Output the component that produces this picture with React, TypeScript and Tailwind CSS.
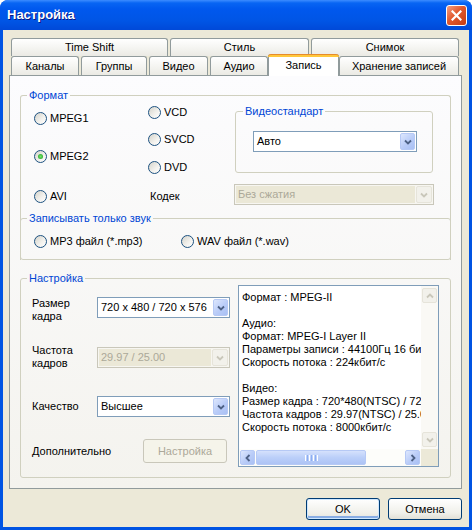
import React from 'react';
import clsx from 'clsx';

type Dir = 'down' | 'up' | 'left' | 'right';

const chevronPts: Record<Dir, string> = {
  down: '1,2.5 4,5.5 7,2.5',
  up: '1,5.5 4,2.5 7,5.5',
  left: '5.5,1 2.5,4 5.5,7',
  right: '2.5,1 5.5,4 2.5,7',
};

function Chevron({ dir = 'down', color = '#4D6185' }: { dir?: Dir; color?: string }) {
  return (
    <svg width="8" height="8" viewBox="0 0 8 8">
      <polyline points={chevronPts[dir]} fill="none" stroke={color} strokeWidth="1.8" />
    </svg>
  );
}

function ArrowBtn({ dir, disabled, className }: { dir: Dir; disabled?: boolean; className?: string }) {
  return (
    <div
      className={clsx(
        'flex items-center justify-center rounded-[2px] border shrink-0',
        disabled
          ? 'border-[#E6E4DA] bg-[#F2F1EB]'
          : 'border-[#B6C9F5] bg-[linear-gradient(135deg,#DDE7FD,#B9CCF8_55%,#A9C0F4)]',
        className
      )}
    >
      <Chevron dir={dir} color={disabled ? '#C9C7BA' : '#4D6185'} />
    </div>
  );
}

function Radio({ label, checked, className }: { label: string; checked?: boolean; className?: string }) {
  return (
    <div className={clsx('flex items-center gap-[3px] h-[13px]', className)}>
      <span className="flex items-center justify-center w-[13px] h-[13px] rounded-full border border-[#1C5180] bg-[linear-gradient(135deg,#D4D3CB,#F3F2EE_60%,#FFFFFF)] shrink-0">
        {checked && <span className="w-[5px] h-[5px] rounded-full bg-[radial-gradient(circle,#72E36C,#1E9E1E)]" />}
      </span>
      <span className="whitespace-nowrap">{label}</span>
    </div>
  );
}

function Combo({ value, disabled, className }: { value: string; disabled?: boolean; className?: string }) {
  if (disabled) {
    return (
      <div className={clsx('flex h-[21px] border border-[#C9C7BA] bg-[#F7F6F1] p-[1px]', className)}>
        <div className="flex-1 flex items-center pl-[2px] bg-[#EBE8D7] text-[#ACA899] whitespace-nowrap">{value}</div>
        <ArrowBtn dir="down" disabled className="w-[16px] ml-[1px]" />
      </div>
    );
  }
  return (
    <div className={clsx('flex h-[21px] border border-[#7F9DB9] bg-white p-[1px]', className)}>
      <div className="flex-1 flex items-center pl-[2px] whitespace-nowrap">{value}</div>
      <ArrowBtn dir="down" className="w-[15px]" />
    </div>
  );
}

function Tab({ label, w, selected }: { label: string; w: string; selected?: boolean }) {
  if (selected) {
    return (
      <div className={clsx('relative z-10 h-[22px] -mb-[1px] flex flex-col rounded-t-[3px] border-x border-[#919B9C] bg-white', w)}>
        <div className="h-[3px] -mx-[1px] rounded-t-[3px] border-t border-[#E68B2C] bg-[#FFC83C]" />
        <div className="flex-1 flex items-center justify-center pb-[2px]">{label}</div>
      </div>
    );
  }
  return (
    <div
      className={clsx(
        'h-full flex items-center justify-center rounded-t-[3px] border border-b-0 border-[#919B9C] bg-[linear-gradient(180deg,#FFFFFF,#F3F3EF_60%,#EBEAE4)]',
        w
      )}
    >
      {label}
    </div>
  );
}

const info = [
  'Формат : MPEG-II',
  '',
  'Аудио:',
  'Формат: MPEG-I Layer II',
  'Параметры записи : 44100Гц 16 бит',
  'Скорость потока : 224кбит/с',
  '',
  'Видео:',
  'Размер кадра : 720*480(NTSC) / 720*576(PAL)',
  'Частота кадров : 29.97(NTSC) / 25.00(PAL)',
  'Скорость потока : 8000кбит/с',
];

const groupBox = 'border border-[#D0D0BF] rounded-[3px] min-w-0';
const legend = 'ml-[6px] px-[2px] leading-[13px] text-[#0046D5]';

export default function App() {
  return (
    <div className="w-[472px] h-[530px] flex flex-col rounded-t-[8px] overflow-hidden bg-[#0054E3] font-['Liberation_Sans',Arial,sans-serif] text-[11px] text-black">
      {/* title bar */}
      <div className="h-[30px] shrink-0 flex items-center justify-between bg-[linear-gradient(180deg,#3C8CFF_0%,#0865F3_10%,#0058EE_30%,#0055E5_70%,#0049D8_100%)]">
        <span className="pl-[7px] text-[13px] font-bold text-white [text-shadow:1px_1px_#0A1883]">Настройка</span>
        <div className="mr-[5px] w-[21px] h-[21px] rounded-[3px] border border-white bg-[linear-gradient(135deg,#F39E82,#E2582D_45%,#C53C13)] flex items-center justify-center">
          <svg width="11" height="11" viewBox="0 0 11 11">
            <path d="M1.5 1.5 L9.5 9.5 M9.5 1.5 L1.5 9.5" stroke="white" strokeWidth="2.2" strokeLinecap="square" />
          </svg>
        </div>
      </div>

      {/* body */}
      <div className="flex-1 mx-[3px] mb-[3px] bg-[#ECE9D8] pt-[8px] flex flex-col">
        <div className="ml-[6px] w-[453px] flex flex-col">
          <div className="flex h-[18px] pl-[2px] gap-[2px]">
            <Tab label="Time Shift" w="w-[157px]" />
            <Tab label="Стиль" w="w-[139px]" />
            <Tab label="Снимок" w="w-[148px]" />
          </div>
          <div className="flex h-[19px] pl-[2px] items-end">
            <Tab label="Каналы" w="w-[68px]" />
            <div className="w-[2px]" />
            <Tab label="Группы" w="w-[66px]" />
            <div className="w-[2px]" />
            <Tab label="Видео" w="w-[59px]" />
            <div className="w-[2px]" />
            <Tab label="Аудио" w="w-[58px]" />
            <Tab label="Запись" w="w-[71px]" selected />
            <Tab label="Хранение записей" w="w-[120px]" />
          </div>

          {/* tab page */}
          <div className="border border-[#919B9C] bg-[linear-gradient(180deg,#FCFCFE,#F4F3EE)] px-[10px] pb-[10px]">
            {/* Формат */}
            <fieldset className={clsx(groupBox, 'mt-[13px] border-b-0 rounded-b-none')}>
              <legend className={legend}>Формат</legend>
              <div className="flex h-[110px] pl-[13px]">
                <div className="w-[114px] flex flex-col">
                  <Radio label="MPEG1" className="mt-[10px]" />
                  <Radio label="MPEG2" checked className="mt-[25px]" />
                  <Radio label="AVI" className="mt-[27px]" />
                </div>
                <div className="w-[86px] flex flex-col">
                  <Radio label="VCD" className="mt-[4px]" />
                  <Radio label="SVCD" className="mt-[14px]" />
                  <Radio label="DVD" className="mt-[15px]" />
                  <div className="mt-[16px] h-[13px] pl-[2px] flex items-center">Кодек</div>
                </div>
                <div className="w-[200px] flex flex-col">
                  <fieldset className={clsx(groupBox, 'mt-[3px] ml-[1px] w-[198px] pb-[20px]')}>
                    <legend className="ml-[7px] px-[2px] leading-[13px] text-[#0046D5]">Видеостандарт</legend>
                    <Combo value="Авто" className="mt-[13px] ml-[17px] w-[164px]" />
                  </fieldset>
                  <Combo value="Без сжатия" disabled className="mt-[11px] w-[200px]" />
                </div>
              </div>

              <fieldset className={clsx(groupBox, '-mx-[1px] pb-[11px]')}>
                <legend className={legend}>Записывать только звук</legend>
                <div className="flex mt-[10px] pl-[13px]">
                  <Radio label="MP3 файл (*.mp3)" className="w-[147px]" />
                  <Radio label="WAV файл (*.wav)" />
                </div>
              </fieldset>
            </fieldset>

            {/* Настройка */}
            <fieldset className={clsx(groupBox, 'mt-[12px] pb-[10px] pl-[11px] pr-[11px]')}>
              <legend className="-ml-[5px] px-[2px] leading-[13px] text-[#0046D5]">Настройка</legend>
              <div className="flex gap-[8px]">
                <div className="w-[198px] flex flex-col">
                  <div className="mt-[12px] flex items-start">
                    <div className="w-[65px] leading-[13px]">
                      Размер
                      <br />
                      кадра
                    </div>
                    <Combo value="720 x 480 / 720 x 576" className="w-[133px]" />
                  </div>
                  <div className="mt-[24px] flex items-start">
                    <div className="w-[65px] leading-[13px] -mt-[3px]">
                      Частота
                      <br />
                      кадров
                    </div>
                    <Combo value="29.97 / 25.00" disabled className="w-[133px]" />
                  </div>
                  <div className="mt-[26px] flex items-center">
                    <div className="w-[65px]">Качество</div>
                    <Combo value="Высшее" className="w-[133px]" />
                  </div>
                  <div className="mt-[22px] flex items-center">
                    <div className="w-[111px]">Дополнительно</div>
                    <div className="w-[84px] h-[24px] rounded-[3px] border border-[#C9C7BA] bg-[#F5F4EA] text-[#ACA899] flex items-center justify-center">
                      Настройка
                    </div>
                  </div>
                </div>

                <div className="w-[201px] h-[182px] border border-[#7F9DB9] bg-white flex flex-col">
                  <div className="flex flex-1 min-h-0">
                    <div className="flex-1 min-w-0 overflow-hidden whitespace-nowrap pl-[3px] pt-[5px] leading-[13px]">
                      {info.map((l, i) => (
                        <div key={i} className="h-[13px]">{l}</div>
                      ))}
                    </div>
                    <div className="w-[17px] flex flex-col justify-between bg-[#FAF9F5] py-[2px] px-[1px]">
                      <ArrowBtn dir="up" disabled className="h-[15px]" />
                      <ArrowBtn dir="down" disabled className="h-[15px]" />
                    </div>
                  </div>
                  <div className="h-[17px] flex">
                    <div className="flex-1 flex bg-[#FDFDFA] p-[1px]">
                      <ArrowBtn dir="left" className="w-[15px]" />
                      <div className="ml-[1px] w-[110px] rounded-[2px] border border-[#B6C9F5] bg-[linear-gradient(180deg,#D5E1FC,#BBCFF9_50%,#ADC3F5)] flex items-center justify-center gap-[1px]">
                        <span className="w-[1px] h-[6px] bg-white" />
                        <span className="w-[1px] h-[6px] bg-[#8CAEF2]" />
                        <span className="w-[1px] h-[6px] bg-white" />
                        <span className="w-[1px] h-[6px] bg-[#8CAEF2]" />
                        <span className="w-[1px] h-[6px] bg-white" />
                        <span className="w-[1px] h-[6px] bg-[#8CAEF2]" />
                        <span className="w-[1px] h-[6px] bg-white" />
                      </div>
                      <div className="flex-1" />
                      <ArrowBtn dir="right" className="w-[15px]" />
                    </div>
                    <div className="w-[17px] bg-[#ECE9D8]" />
                  </div>
                </div>
              </div>
            </fieldset>
          </div>

          {/* buttons */}
          <div className="mt-[9px] flex justify-end gap-[8px]">
            <div className="w-[74px] h-[22px] rounded-[3px] border border-[#003C74] bg-[linear-gradient(180deg,#FFFFFF,#F0F0EA_70%,#E5E4DC)] shadow-[inset_0_0_0_1px_#CEE7FF,inset_0_-2px_0_1px_#89ADE4] flex items-center justify-center">
              OK
            </div>
            <div className="w-[74px] h-[22px] rounded-[3px] border border-[#003C74] bg-[linear-gradient(180deg,#FFFFFF,#F0F0EA_70%,#E2E0D6)] flex items-center justify-center">
              Отмена
            </div>
          </div>
        </div>
      </div>
    </div>
  );
}
